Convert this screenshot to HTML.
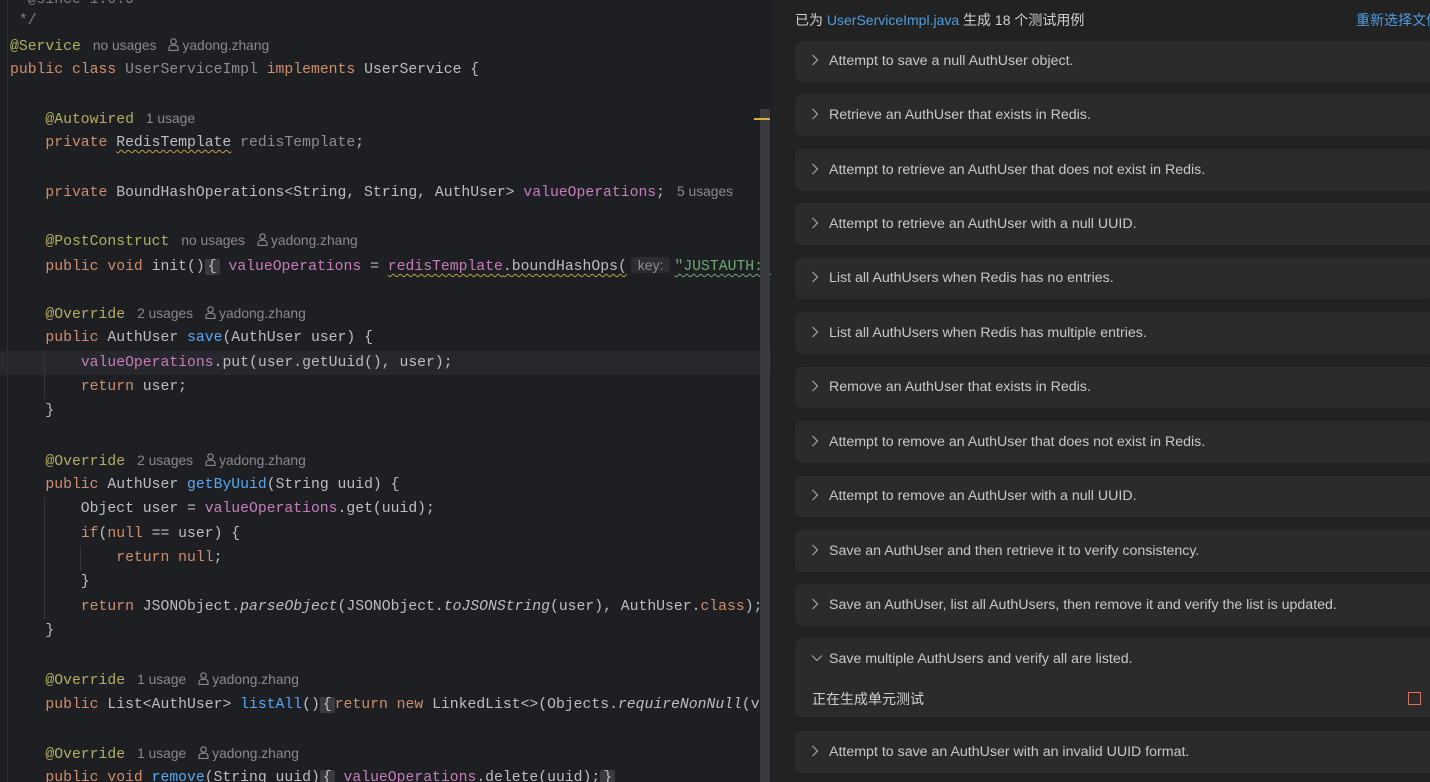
<!DOCTYPE html>
<html><head><meta charset="utf-8"><style>
*{margin:0;padding:0;box-sizing:border-box}
body{width:1430px;height:782px;overflow:hidden;background:#1e1f22;position:relative;font-family:"Liberation Sans","Noto Sans CJK SC",sans-serif}
#ed{position:absolute;left:0;top:0;width:771px;height:782px;background:#1e1f22;overflow:hidden}
.l{position:absolute;left:10px;height:24px;line-height:24px;font-family:"Liberation Mono",monospace;font-size:14.75px;color:#bcbec4;white-space:pre}
.k{color:#cf8e6d}.a{color:#b3ae60}.f{color:#c77dbb}.m{color:#56a8f5}.s{color:#6aab73}.g{color:#7a7e85}.i{font-style:italic}
.h{font-family:"Liberation Sans",sans-serif;font-size:13.8px;color:#868a91;margin-left:12px}
.u{text-decoration:underline wavy #b8a14a;text-decoration-thickness:1px;text-underline-offset:3px}
.us{text-decoration:underline wavy #6aab73;text-decoration-thickness:1px;text-underline-offset:3px}
.fold{background:#393b40;padding:0 3px;border-radius:2px}
.hint{background:#2b2d30;color:#8b8e94;font-family:"Liberation Sans",sans-serif;font-size:14px;padding:0 7px;border-radius:4px;margin:0 4px}
.p{display:inline-block;width:11px;height:13px;vertical-align:-1px;margin-right:3px}
#rp{position:absolute;left:771px;top:0;width:659px;height:782px;background:#222222}
.c{position:absolute;left:24px;width:640px;background:#2b2b2b;border-radius:7px}
.c .t{position:absolute;left:34px;font-size:14.2px;color:#c8c8c8;white-space:nowrap}
.c svg.ch{position:absolute;left:16px}
</style></head><body>
<div id="ed">
<div style="position:absolute;left:0;top:351px;width:771px;height:24px;background:#26282e"></div>
<div style="position:absolute;left:7px;top:0;width:1px;height:782px;background:#2b2d30"></div>
<div style="position:absolute;left:44px;top:351px;width:1px;height:48px;background:#35373b"></div>
<div style="position:absolute;left:44px;top:497px;width:1px;height:122px;background:#35373b"></div>
<div style="position:absolute;left:80px;top:546px;width:1px;height:24px;background:#35373b"></div>

<div class="l g" style="top:-12px">  @since 1.0.0</div>
<div class="l g" style="top:9px"> */</div>
<div class="l" style="top:34px"><span class="a">@Service</span><span class="h">no usages</span><span class="h"><svg class="p" viewBox="0 0 11 13"><circle cx="5.5" cy="3.5" r="2.7" fill="none" stroke="#868a91" stroke-width="1.2"/><path d="M1 12.5v-2.5c0-1.6 1.5-2.8 4.5-2.8s4.5 1.2 4.5 2.8v2.5z" fill="none" stroke="#868a91" stroke-width="1.2"/></svg>yadong.zhang</span></div>
<div class="l" style="top:58px"><span class="k">public class </span><span style="color:#8a8d93">UserServiceImpl</span><span class="k"> implements </span>UserService {</div>
<div class="l" style="top:107px">    <span class="a">@Autowired</span><span class="h">1 usage</span></div>
<div class="l" style="top:131px">    <span class="k">private </span><span class="u">RedisTemplate</span> <span style="color:#8a8d93">redisTemplate</span>;</div>
<div class="l" style="top:180px">    <span class="k">private </span>BoundHashOperations&lt;String, String, AuthUser&gt; <span class="f">valueOperations</span>;<span class="h">5 usages</span></div>
<div class="l" style="top:229px">    <span class="a">@PostConstruct</span><span class="h">no usages</span><span class="h"><svg class="p" viewBox="0 0 11 13"><circle cx="5.5" cy="3.5" r="2.7" fill="none" stroke="#868a91" stroke-width="1.2"/><path d="M1 12.5v-2.5c0-1.6 1.5-2.8 4.5-2.8s4.5 1.2 4.5 2.8v2.5z" fill="none" stroke="#868a91" stroke-width="1.2"/></svg>yadong.zhang</span></div>
<div class="l" style="top:253px">    <span class="k">public void </span>init()<span class="fold">{</span> <span class="f">valueOperations</span> = <span class="f u">redisTemplate</span><span class="u">.boundHashOps(</span><span class="hint">key:</span><span class="s us">"JUSTAUTH::</span></div>
<div class="l" style="top:302px">    <span class="a">@Override</span><span class="h">2 usages</span><span class="h"><svg class="p" viewBox="0 0 11 13"><circle cx="5.5" cy="3.5" r="2.7" fill="none" stroke="#868a91" stroke-width="1.2"/><path d="M1 12.5v-2.5c0-1.6 1.5-2.8 4.5-2.8s4.5 1.2 4.5 2.8v2.5z" fill="none" stroke="#868a91" stroke-width="1.2"/></svg>yadong.zhang</span></div>
<div class="l" style="top:326px">    <span class="k">public </span>AuthUser <span class="m">save</span>(AuthUser user) {</div>
<div class="l" style="top:351px">        <span class="f">valueOperations</span>.put(user.getUuid(), user);</div>
<div class="l" style="top:375px">        <span class="k">return </span>user;</div>
<div class="l" style="top:399px">    }</div>
<div class="l" style="top:449px">    <span class="a">@Override</span><span class="h">2 usages</span><span class="h"><svg class="p" viewBox="0 0 11 13"><circle cx="5.5" cy="3.5" r="2.7" fill="none" stroke="#868a91" stroke-width="1.2"/><path d="M1 12.5v-2.5c0-1.6 1.5-2.8 4.5-2.8s4.5 1.2 4.5 2.8v2.5z" fill="none" stroke="#868a91" stroke-width="1.2"/></svg>yadong.zhang</span></div>
<div class="l" style="top:473px">    <span class="k">public </span>AuthUser <span class="m">getByUuid</span>(String uuid) {</div>
<div class="l" style="top:497px">        Object user = <span class="f">valueOperations</span>.get(uuid);</div>
<div class="l" style="top:522px">        <span class="k">if</span>(<span class="k">null</span> == user) {</div>
<div class="l" style="top:546px">            <span class="k">return null</span>;</div>
<div class="l" style="top:570px">        }</div>
<div class="l" style="top:595px">        <span class="k">return </span>JSONObject.<span class="i">parseObject</span>(JSONObject.<span class="i">toJSONString</span>(user), AuthUser.<span class="k">class</span>);</div>
<div class="l" style="top:619px">    }</div>
<div class="l" style="top:668px">    <span class="a">@Override</span><span class="h">1 usage</span><span class="h"><svg class="p" viewBox="0 0 11 13"><circle cx="5.5" cy="3.5" r="2.7" fill="none" stroke="#868a91" stroke-width="1.2"/><path d="M1 12.5v-2.5c0-1.6 1.5-2.8 4.5-2.8s4.5 1.2 4.5 2.8v2.5z" fill="none" stroke="#868a91" stroke-width="1.2"/></svg>yadong.zhang</span></div>
<div class="l" style="top:693px">    <span class="k">public </span>List&lt;AuthUser&gt; <span class="m">listAll</span>()<span class="fold">{</span><span class="k">return new </span>LinkedList&lt;&gt;(Objects.<span class="i">requireNonNull</span>(v</div>
<div class="l" style="top:742px">    <span class="a">@Override</span><span class="h">1 usage</span><span class="h"><svg class="p" viewBox="0 0 11 13"><circle cx="5.5" cy="3.5" r="2.7" fill="none" stroke="#868a91" stroke-width="1.2"/><path d="M1 12.5v-2.5c0-1.6 1.5-2.8 4.5-2.8s4.5 1.2 4.5 2.8v2.5z" fill="none" stroke="#868a91" stroke-width="1.2"/></svg>yadong.zhang</span></div>
<div class="l" style="top:766px">    <span class="k">public void </span><span class="m">remove</span>(String uuid)<span class="fold">{</span> <span class="f">valueOperations</span>.delete(uuid);<span class="fold">}</span></div>
<div style="position:absolute;left:760px;top:109px;width:10px;height:673px;background:#3a3b3e"></div>
<div style="position:absolute;left:754px;top:118px;width:16px;height:2px;background:#d7b040"></div>
</div>

<div id="rp">
<div style="position:absolute;left:24px;top:10px;font-size:14px;color:#d0d0d0;white-space:nowrap">已为 <span style="color:#4e9de0">UserServiceImpl.java</span> 生成 18 个测试用例</div>
<div style="position:absolute;left:585px;top:10px;font-size:14px;color:#4e9de0;white-space:nowrap">重新选择文件</div>

<div class="c" style="top:41px;height:41px"><svg class="ch" style="top:13px" width="8" height="12"><path d="M1.5 1l5 5-5 5" fill="none" stroke="#aaa" stroke-width="1.1"/></svg><span class="t" style="top:12px">Attempt to save a null AuthUser object.</span></div>
<div class="c" style="top:94px;height:42px"><svg class="ch" style="top:14px" width="8" height="12"><path d="M1.5 1l5 5-5 5" fill="none" stroke="#aaa" stroke-width="1.1"/></svg><span class="t" style="top:13px">Retrieve an AuthUser that exists in Redis.</span></div>
<div class="c" style="top:149px;height:42px"><svg class="ch" style="top:14px" width="8" height="12"><path d="M1.5 1l5 5-5 5" fill="none" stroke="#aaa" stroke-width="1.1"/></svg><span class="t" style="top:13px">Attempt to retrieve an AuthUser that does not exist in Redis.</span></div>
<div class="c" style="top:203px;height:42px"><svg class="ch" style="top:14px" width="8" height="12"><path d="M1.5 1l5 5-5 5" fill="none" stroke="#aaa" stroke-width="1.1"/></svg><span class="t" style="top:13px">Attempt to retrieve an AuthUser with a null UUID.</span></div>
<div class="c" style="top:258px;height:41px"><svg class="ch" style="top:13px" width="8" height="12"><path d="M1.5 1l5 5-5 5" fill="none" stroke="#aaa" stroke-width="1.1"/></svg><span class="t" style="top:12px">List all AuthUsers when Redis has no entries.</span></div>
<div class="c" style="top:312px;height:42px"><svg class="ch" style="top:14px" width="8" height="12"><path d="M1.5 1l5 5-5 5" fill="none" stroke="#aaa" stroke-width="1.1"/></svg><span class="t" style="top:13px">List all AuthUsers when Redis has multiple entries.</span></div>
<div class="c" style="top:367px;height:41px"><svg class="ch" style="top:13px" width="8" height="12"><path d="M1.5 1l5 5-5 5" fill="none" stroke="#aaa" stroke-width="1.1"/></svg><span class="t" style="top:12px">Remove an AuthUser that exists in Redis.</span></div>
<div class="c" style="top:421px;height:42px"><svg class="ch" style="top:14px" width="8" height="12"><path d="M1.5 1l5 5-5 5" fill="none" stroke="#aaa" stroke-width="1.1"/></svg><span class="t" style="top:13px">Attempt to remove an AuthUser that does not exist in Redis.</span></div>
<div class="c" style="top:476px;height:41px"><svg class="ch" style="top:13px" width="8" height="12"><path d="M1.5 1l5 5-5 5" fill="none" stroke="#aaa" stroke-width="1.1"/></svg><span class="t" style="top:12px">Attempt to remove an AuthUser with a null UUID.</span></div>
<div class="c" style="top:530px;height:42px"><svg class="ch" style="top:14px" width="8" height="12"><path d="M1.5 1l5 5-5 5" fill="none" stroke="#aaa" stroke-width="1.1"/></svg><span class="t" style="top:13px">Save an AuthUser and then retrieve it to verify consistency.</span></div>
<div class="c" style="top:584px;height:42px"><svg class="ch" style="top:14px" width="8" height="12"><path d="M1.5 1l5 5-5 5" fill="none" stroke="#aaa" stroke-width="1.1"/></svg><span class="t" style="top:13px">Save an AuthUser, list all AuthUsers, then remove it and verify the list is updated.</span></div>
<div class="c" style="top:638px;height:79px"><svg class="ch" style="top:16px" width="12" height="8"><path d="M1 1.5l5 5 5-5" fill="none" stroke="#aaa" stroke-width="1.1"/></svg><span class="t" style="top:13px">Save multiple AuthUsers and verify all are listed.</span>
<span style="position:absolute;left:17px;top:51px;font-size:14px;color:#d0d0d0">正在生成单元测试</span>
<span style="position:absolute;left:613px;top:54px;width:13px;height:13px;border:1.3px solid #d8705a"></span></div>
<div class="c" style="top:731px;height:42px"><svg class="ch" style="top:14px" width="8" height="12"><path d="M1.5 1l5 5-5 5" fill="none" stroke="#aaa" stroke-width="1.1"/></svg><span class="t" style="top:13px">Attempt to save an AuthUser with an invalid UUID format.</span></div>
</div>
</body></html>
